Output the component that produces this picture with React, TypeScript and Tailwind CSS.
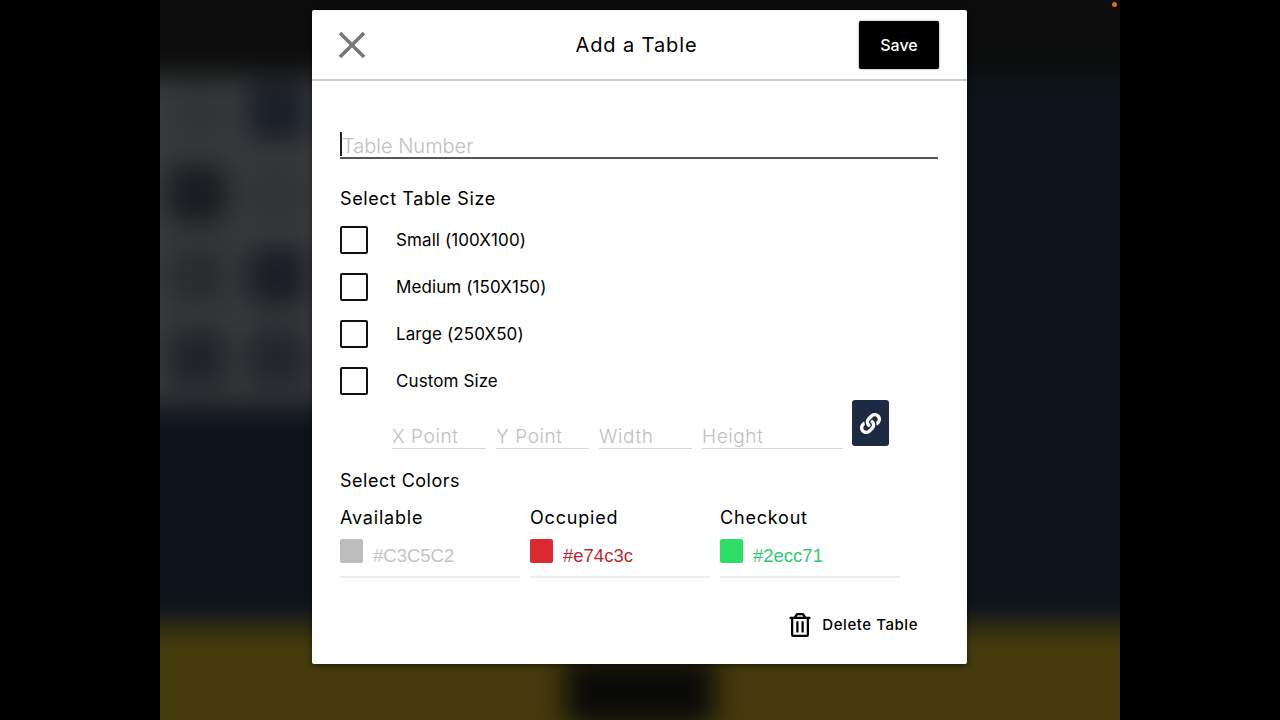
import { FaLink, FaRegTrashAlt } from "react-icons/fa";

const sizes = ["Small (100X100)", "Medium (150X150)", "Large (250X50)", "Custom Size"];

const blobs = [
  "bg-[#323438]", "bg-[#1a1f27]",
  "bg-[#191b20]", "bg-[#323335]",
  "bg-[#292b2f]", "bg-[#1a1d24]",
  "bg-[#212329]", "bg-[#22252b]",
];

const colors = [
  { label: "Available", value: "#C3C5C2", swatch: "bg-[#bdbdbd]", text: "text-[#c3c5c2]" },
  { label: "Occupied", value: "#e74c3c", swatch: "bg-[#db2a30]", text: "text-[#c1272f]" },
  { label: "Checkout", value: "#2ecc71", swatch: "bg-[#2ade66]", text: "text-[#2ecc71]" },
];

function Backdrop() {
  return (
    <div className="absolute -inset-[40px] flex flex-col blur-[14px]">
      <div className="h-[115px] bg-[#0b0c0b]" />
      <div className="flex grow bg-[#0f141b]">
        <div className="h-[330px] w-[250px] bg-[#3a3b3d] grid grid-cols-2 content-start gap-x-[26px] gap-y-[22px] pl-[47px] pr-[70px] pt-[7px]">
          {blobs.map((c, i) => (
            <div key={i} className={"h-[60px] w-[60px] rounded-md " + c} />
          ))}
        </div>
      </div>
      <div className="flex h-[135px] justify-center bg-[#453b0c]">
        <div className="mt-[32px] h-[70px] w-[150px] rounded-lg bg-[#0a0a08]" />
      </div>
    </div>
  );
}

function Field({ placeholder, className }: { placeholder: string; className: string }) {
  return (
    <input
      readOnly
      placeholder={placeholder}
      className={"h-[29px] border-b border-[#d6d6d6] pt-[4px] text-[19px] font-light tracking-[0.6px] outline-none placeholder:text-[#c0c0c0] " + className}
    />
  );
}

export default function App() {
  return (
    <div className="h-[720px] w-[1280px] overflow-hidden bg-black font-['Inter',sans-serif] text-black">
      <div className="relative mx-[160px] h-[720px] overflow-hidden pl-[152px] pt-[10px]">
        <Backdrop />
        <div className="absolute right-[3px] top-[2px] h-[5px] w-[5px] rounded-full bg-[#d2701c]" />

        <div className="relative flex h-[654px] w-[655px] flex-col rounded-[2px] bg-white shadow-[0_2px_6px_rgba(0,0,0,0.5)]">
          <div className="grid h-[71px] shrink-0 grid-cols-[1fr_auto_1fr] items-center border-b-2 border-[#cfcfcf] pl-[25px] pr-[28px]">
            <svg width="30" height="30" viewBox="0 0 30 30" className="text-[#777777]">
              <path d="M3 3L27 27M27 3L3 27" stroke="currentColor" strokeWidth="3.6" fill="none" />
            </svg>
            <div className="pr-[3px] text-[20px] tracking-[0.9px]">Add a Table</div>
            <button className="h-[48px] w-[80px] justify-self-end rounded-[2px] bg-black text-[16px] font-medium text-white shadow-[0_0_2px_rgba(0,0,0,0.6)]">Save</button>
          </div>

          <div className="flex grow flex-col pl-[28px] pr-[28px]">
            <div className="relative mr-[1px] mt-[50px]">
              <input
                readOnly
                placeholder="Table Number"
                className="h-[28px] w-full border-b-2 border-[#555555] pl-[2px] pt-[3px] text-[20px] font-light outline-none placeholder:text-[#c0c0c0]"
              />
              <div className="absolute left-0 top-[1px] h-[24px] w-[2px] bg-[#222222]" />
            </div>

            <div className="mt-[28px] text-[18px] leading-[24px] tracking-[0.6px]">Select Table Size</div>

            <div className="mt-[15px] flex flex-col gap-[19px]">
              {sizes.map((s) => (
                <div key={s} className="flex h-[28px] items-center gap-[28px]">
                  <div className="h-[28px] w-[28px] rounded-[2px] border-2 border-[#111111]" />
                  <div className="pt-[2px] text-[17px] tracking-[0.1px]">{s}</div>
                </div>
              ))}
            </div>

            <div className="mt-[5px] flex items-end pl-[52px]">
              <div className="flex gap-[10px]">
                <Field placeholder="X Point" className="w-[94px]" />
                <Field placeholder="Y Point" className="w-[93px]" />
                <Field placeholder="Width" className="w-[93px]" />
                <Field placeholder="Height" className="w-[141px]" />
              </div>
              <div className="mb-[3px] ml-[9px] flex h-[46px] w-[37px] items-center justify-center rounded-[3px] bg-[#1c2b41] text-white">
                <FaLink size={21} />
              </div>
            </div>

            <div className="mt-[20px] text-[18px] leading-[24px] tracking-[0.5px]">Select Colors</div>

            <div className="mt-[13px] flex gap-[10px]">
              {colors.map((c) => (
                <div key={c.label} className="w-[180px]">
                  <div className="text-[18px] leading-[24px] tracking-[0.8px]">{c.label}</div>
                  <div className="mt-[9px] flex h-[39px] items-start gap-[10px] border-b-2 border-[#eeeeee]">
                    <div className={"h-[24px] w-[23px] rounded-[2px] " + c.swatch} />
                    <div className={"mt-[5px] font-['Liberation_Sans',sans-serif] text-[18.5px] leading-[24px] " + c.text}>{c.value}</div>
                  </div>
                </div>
              ))}
            </div>

            <div className="mt-[35px] flex items-center justify-end gap-[10px] pr-[21px]">
              <FaRegTrashAlt size={24} />
              <div className="text-[15px] font-medium tracking-[0.55px]">Delete Table</div>
            </div>
          </div>
        </div>
      </div>
    </div>
  );
}
